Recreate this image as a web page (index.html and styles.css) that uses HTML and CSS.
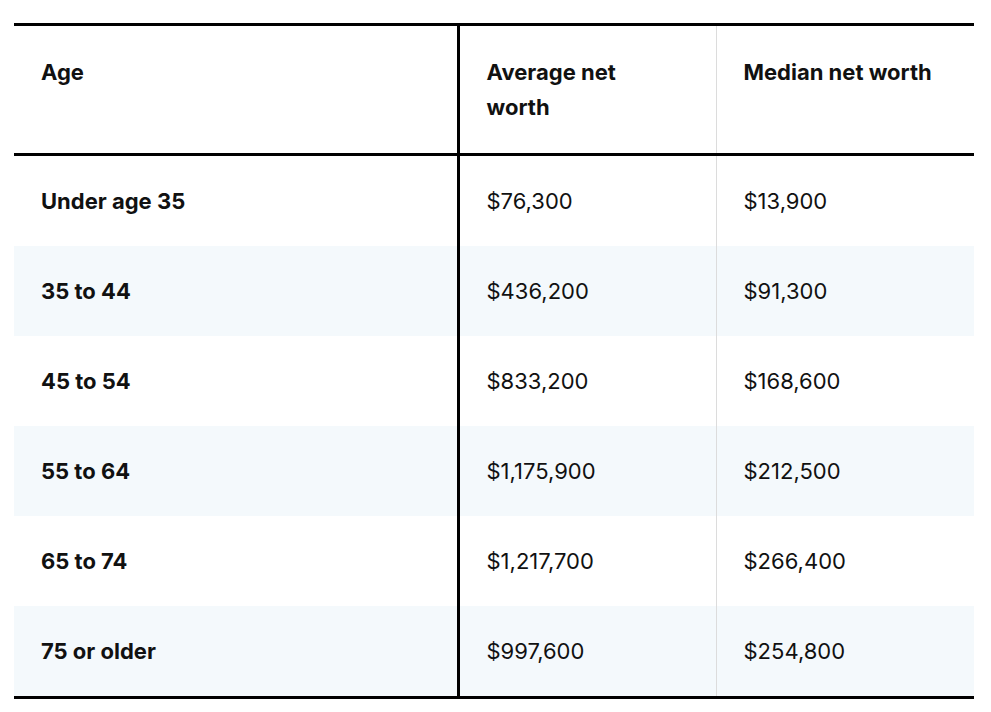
FILE: index.html
```html
<!DOCTYPE html>
<html>
<head>
<meta charset="utf-8">
<link rel="stylesheet" href="styles.css">
</head>
<body>
<table class="nw-table">
  <colgroup>
    <col class="col1">
    <col class="col2">
    <col class="col3">
  </colgroup>
  <thead>
    <tr>
      <th class="c1">Age</th>
      <th class="c2">Average net<br>worth</th>
      <th class="c3">Median net worth</th>
    </tr>
  </thead>
  <tbody>
    <tr><td class="c1 age">Under age 35</td><td class="c2">$76,300</td><td class="c3">$13,900</td></tr>
    <tr class="alt"><td class="c1 age">35 to 44</td><td class="c2">$436,200</td><td class="c3">$91,300</td></tr>
    <tr><td class="c1 age">45 to 54</td><td class="c2">$833,200</td><td class="c3">$168,600</td></tr>
    <tr class="alt"><td class="c1 age">55 to 64</td><td class="c2">$1,175,900</td><td class="c3">$212,500</td></tr>
    <tr><td class="c1 age">65 to 74</td><td class="c2">$1,217,700</td><td class="c3">$266,400</td></tr>
    <tr class="alt"><td class="c1 age">75 or older</td><td class="c2">$997,600</td><td class="c3">$254,800</td></tr>
  </tbody>
</table>
</body>
</html>
```

FILE: styles.css
```css
html, body {
  margin: 0;
  padding: 0;
  background: #ffffff;
}
body {
  padding: 23px 0 0 14px;
  font-family: Inter, "Noto Sans", sans-serif;
  color: #111111;
}
.nw-table {
  width: 960px;
  border-collapse: collapse;
  table-layout: fixed;
  border-top: 3px solid #000;
  border-bottom: 3px solid #000;
}
.col1 { width: 444px; }
.col2 { width: 258px; }
.col3 { width: 258px; }
.nw-table th,
.nw-table td {
  text-align: left;
  font-size: 22px;
  line-height: 35px;
  padding: 0 28px 0 27px;
}
.nw-table th {
  font-weight: 700;
  vertical-align: top;
  padding-top: 29px;
  padding-bottom: 28px;
  height: 70px;
  border-bottom: 3px solid #000;
}
.nw-table td {
  height: 90px;
  vertical-align: middle;
  font-weight: 400;
}
.nw-table td.age {
  font-weight: 700;
}
.c1 {
  border-right: 3px solid #000;
}
.c2 {
  border-right: 1px solid #dcdcdc;
}
.nw-table tr.alt td {
  background: #f4f9fc;
}
```
